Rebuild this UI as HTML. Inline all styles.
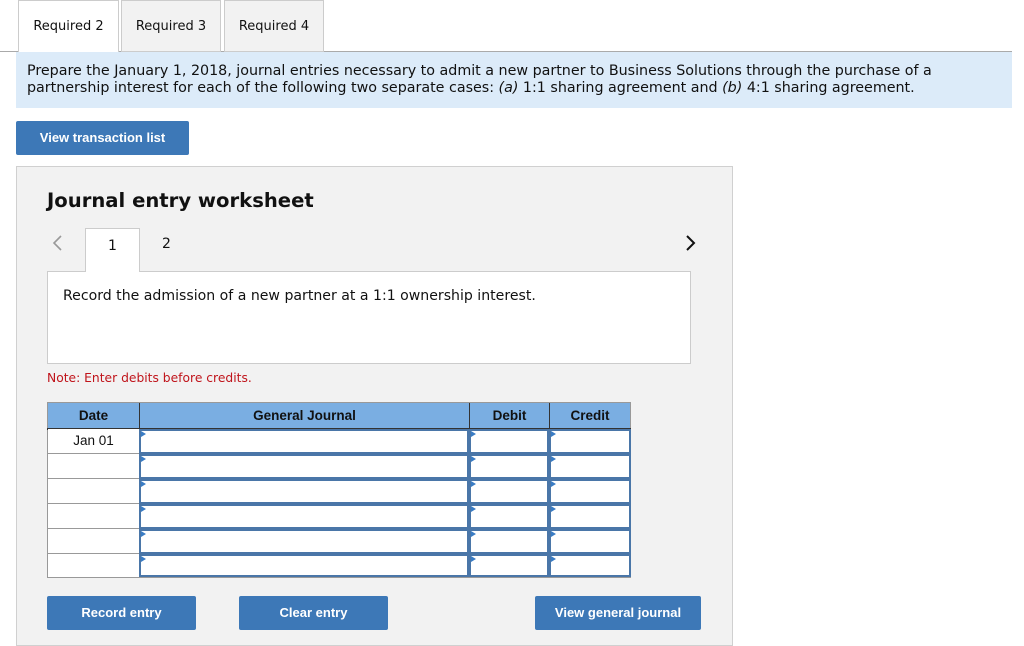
<!DOCTYPE html>
<html><head><style>
*{box-sizing:border-box;margin:0;padding:0}
body{width:1024px;height:638px;background:#fff;position:relative;overflow:hidden;font-family:"DejaVu Sans","Liberation Sans",sans-serif;color:#111}
.a{position:absolute}
.tab{position:absolute;top:0;height:52px;border:1px solid #ccc;background:#f2f2f2;font-size:13px;text-align:center;line-height:52px}
.btn{position:absolute;background:#3d78b7;color:#fff;font-family:"Liberation Sans",sans-serif;font-weight:bold;font-size:13px;text-align:center;border-radius:2px}
.row{position:absolute;left:47px;width:584px;height:25px}
.c{position:absolute;top:0;height:25px;background:#fff}
.d{height:24px}
.c.i{border:2px solid #4a76a8}
.c.i:before{content:"";position:absolute;left:0;top:0;border-left:5px solid #3a7cc4;border-top:3px solid transparent;border-bottom:3px solid transparent}
</style></head><body>
<div class="a" style="left:0;top:51px;width:1012px;height:1px;background:#aaa"></div>
<div class="tab" style="left:18px;width:101px;background:#fff;border-bottom:none;height:53px">Required 2</div>
<div class="tab" style="left:121px;width:100px">Required 3</div>
<div class="tab" style="left:224px;width:100px">Required 4</div>
<div class="a" style="left:16px;top:52px;width:996px;height:56px;background:#dcebf9;font-size:14.3px;line-height:17px;padding:11px 0 0 11px;letter-spacing:-0.02px;white-space:nowrap">Prepare the January 1, 2018, journal entries necessary to admit a new partner to Business Solutions through the purchase of a<br>partnership interest for each of the following two separate cases: <i>(a)</i> 1:1 sharing agreement and <i>(b)</i> 4:1 sharing agreement.</div>
<div class="btn" style="left:16px;top:121px;width:173px;height:34px;line-height:34px">View transaction list</div>
<div class="a" style="left:16px;top:166px;width:717px;height:480px;background:#f2f2f2;border:1px solid #d0d0d0"></div>
<div class="a" style="left:47px;top:189px;font-size:19.6px;font-weight:bold">Journal entry worksheet</div>
<svg class="a" style="left:51px;top:234px" width="12" height="18"><path d="M10 2 L3 9 L10 16" stroke="#999" stroke-width="1.6" fill="none"/></svg>
<div class="a" style="left:85px;top:228px;width:55px;height:44px;background:#fff;border:1px solid #ccc;border-bottom:none;text-align:center;line-height:34px;font-size:14px;z-index:2">1</div>
<div class="a" style="left:162px;top:236px;font-size:14px">2</div>
<svg class="a" style="left:684px;top:234px" width="14" height="18"><path d="M3 2 L10 9 L3 16" stroke="#111" stroke-width="2" fill="none"/></svg>
<div class="a" style="left:47px;top:271px;width:644px;height:93px;background:#fff;border:1px solid #ccc;font-size:14.1px;padding:16px 0 0 15px">Record the admission of a new partner at a 1:1 ownership interest.</div>
<div class="a" style="left:47px;top:371px;font-size:12.3px;color:#c0141b">Note: Enter debits before credits.</div>
<div class="a" style="left:47px;top:402px;width:584px;height:176px;background:#999"></div>
<div class="a" style="left:48px;top:403px;width:582px;height:25px;background:#7aaee2;font-family:'Liberation Sans',sans-serif;font-weight:bold;font-size:13.5px;line-height:25px">
<div class="a" style="left:0;width:91px;text-align:center">Date</div>
<div class="a" style="left:91px;width:330px;text-align:center;border-left:1px solid #333;height:25px">General Journal</div>
<div class="a" style="left:421px;width:80px;text-align:center;border-left:1px solid #333;height:25px">Debit</div>
<div class="a" style="left:501px;width:81px;text-align:center;border-left:1px solid #333;height:25px">Credit</div>
</div>
<div class="a" style="left:47px;top:428px;width:584px;height:2px;background:#333"></div>
<div class="row" style="top:429px"><div class="c d" style="left:1px;width:91px;font-family:'Liberation Sans',sans-serif;font-size:13.5px;text-align:center;line-height:24px">Jan 01</div><div class="c i" style="left:92px;width:330px"></div><div class="c i" style="left:422px;width:80px"></div><div class="c i" style="left:502px;width:82px"></div></div>
<div class="row" style="top:454px"><div class="c d" style="left:1px;width:91px"></div><div class="c i" style="left:92px;width:330px"></div><div class="c i" style="left:422px;width:80px"></div><div class="c i" style="left:502px;width:82px"></div></div>
<div class="row" style="top:479px"><div class="c d" style="left:1px;width:91px"></div><div class="c i" style="left:92px;width:330px"></div><div class="c i" style="left:422px;width:80px"></div><div class="c i" style="left:502px;width:82px"></div></div>
<div class="row" style="top:504px"><div class="c d" style="left:1px;width:91px"></div><div class="c i" style="left:92px;width:330px"></div><div class="c i" style="left:422px;width:80px"></div><div class="c i" style="left:502px;width:82px"></div></div>
<div class="row" style="top:529px"><div class="c d" style="left:1px;width:91px"></div><div class="c i" style="left:92px;width:330px"></div><div class="c i" style="left:422px;width:80px"></div><div class="c i" style="left:502px;width:82px"></div></div>
<div class="row" style="top:554px;height:23px"><div class="c" style="left:1px;width:91px;height:23px"></div><div class="c i" style="left:92px;width:330px;height:23px"></div><div class="c i" style="left:422px;width:80px;height:23px"></div><div class="c i" style="left:502px;width:82px;height:23px"></div></div>
<div class="btn" style="left:47px;top:596px;width:149px;height:34px;line-height:34px">Record entry</div>
<div class="btn" style="left:239px;top:596px;width:149px;height:34px;line-height:34px">Clear entry</div>
<div class="btn" style="left:535px;top:596px;width:166px;height:34px;line-height:34px">View general journal</div>
</body></html>
